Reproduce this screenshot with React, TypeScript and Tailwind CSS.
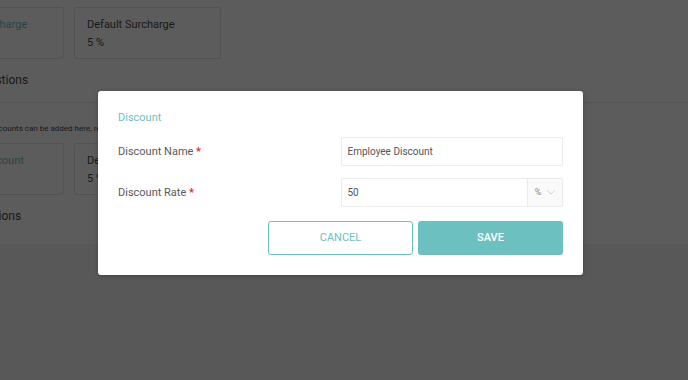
import React from 'react';

const teal = 'text-[#6cc0bf]';

const InfoCard = ({ title, value, accent }: { title: string; value: string; accent?: boolean }) => (
    <div className="w-[147px] h-[52px] shrink-0 border border-[#e2e2e2] rounded-[3px] px-[12px] pt-[9px]">
        <div className={`text-[11px] leading-[15px] whitespace-nowrap ${accent ? teal : 'text-[#4a4a4a]'}`}>{title}</div>
        <div className="mt-[3px] text-[11px] leading-[15px] text-[#4a4a4a]">{value}</div>
    </div>
);

const Chevron = () => (
    <svg viewBox="0 0 10 6" className="w-[8px] h-[5px]" fill="none" stroke="#c4c4c4" strokeWidth={1}>
        <path d="M0.5 0.5L5 5L9.5 0.5" />
    </svg>
);

const App = () => {
    return (
        <div className="relative w-[688px] h-[380px] overflow-hidden bg-[#f2f3f2] font-['Roboto',sans-serif]">
            {/* Settings page behind the dialog */}
            <div className="h-[244px] bg-white pt-[7px]">
                <div className="ml-[-83px]">
                    <div className="flex gap-[10px]">
                        <InfoCard title="Weekend Surcharge" value="10 %" accent />
                        <InfoCard title="Default Surcharge" value="5 %" />
                    </div>
                    <div className="mt-[13px] text-[12px] leading-[16px] text-[#4a4a4a] whitespace-nowrap">Surcharge Questions</div>
                </div>
                <div className="mt-[14px] border-t border-[#e6e6e6]" />
                <div className="ml-[-83px]">
                    <p className="mt-[20px] text-[8px] leading-[12px] text-[#4a4a4a] whitespace-nowrap">
                        Staff and employee discounts can be added here, removed or edited at any time.
                    </p>
                    <div className="mt-[8px] flex gap-[10px]">
                        <InfoCard title="Employee Discount" value="50 %" accent />
                        <InfoCard title="Default Discount" value="5 %" />
                    </div>
                    <div className="mt-[13px] text-[12px] leading-[16px] text-[#4a4a4a] whitespace-nowrap">Discount Questions</div>
                </div>
            </div>

            {/* Backdrop */}
            <div className="absolute inset-0 bg-black/[0.64]" />

            {/* Dialog */}
            <div className="absolute left-[98px] top-[91px] w-[485px] bg-white rounded-[3px] shadow-[0_1px_4px_rgba(0,0,0,0.25)] px-[20px] pt-[19px] pb-[20px]">
                <h3 className={`text-[11px] leading-[16px] ${teal}`}>Discount</h3>

                <div className="mt-[11px] grid grid-cols-2 items-center">
                    <label className="pt-[1px] text-[11px] text-[#5a5a5a]">
                        Discount Name <span className="text-[#e3262e] font-bold">*</span>
                    </label>
                    <div className="h-[29px] border border-[#ebebeb] rounded-[2px] flex items-center px-[6px] text-[10px] text-[#555]">
                        Employee Discount
                    </div>
                </div>

                <div className="mt-[12px] grid grid-cols-2 items-center">
                    <label className="pt-[2px] text-[11px] text-[#5a5a5a]">
                        Discount Rate <span className="text-[#e3262e] font-bold">*</span>
                    </label>
                    <div className="h-[29px] border border-[#ebebeb] rounded-[2px] flex">
                        <div className="flex-1 flex items-center px-[6px] text-[10px] text-[#555]">50</div>
                        <div className="w-[35px] border-l border-[#ebebeb] bg-[#fafafa] flex items-center justify-center gap-[6px]">
                            <span className="text-[9px] text-[#888]">%</span>
                            <Chevron />
                        </div>
                    </div>
                </div>

                <div className="mt-[14px] flex justify-end gap-[5px]">
                    <button className={`w-[145px] h-[34px] border border-[#6cc0bf] rounded-[3px] bg-white text-[11px] ${teal}`}>
                        CANCEL
                    </button>
                    <button className="w-[145px] h-[34px] rounded-[3px] bg-[#6cc0bf] text-[11px] font-medium text-white">
                        SAVE
                    </button>
                </div>
            </div>
        </div>
    );
};

export default App;
